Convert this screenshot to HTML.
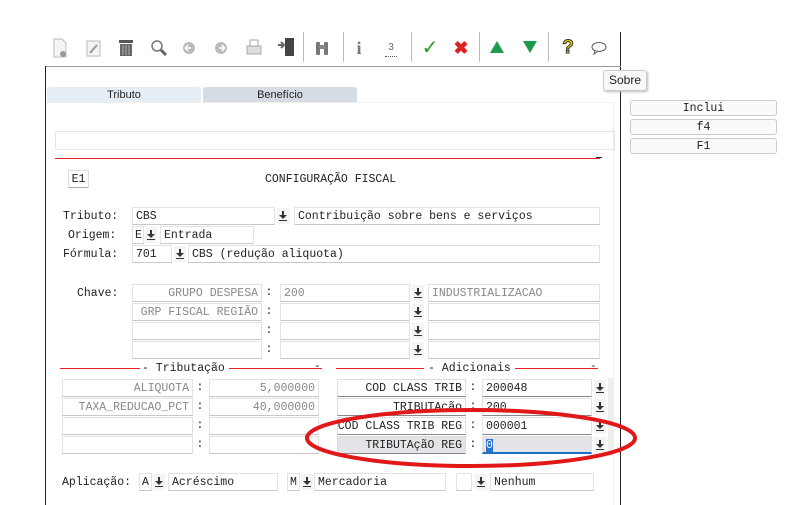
<!DOCTYPE html>
<html><head><meta charset="utf-8"><style>
*{box-sizing:border-box;margin:0;padding:0}
body{width:786px;height:505px;background:#fff;position:relative;overflow:hidden;font-family:"Liberation Mono",monospace;font-size:11.5px;color:#222}
.a{position:absolute}
.f{position:absolute;height:18px;background:#fff;border:1px solid #e2e2e2;border-bottom:1px solid #c8c8c8;line-height:17px;padding:0 3px;white-space:nowrap;overflow:hidden}
.g{color:#888}
.r{text-align:right}
.lb{position:absolute;height:18px;border:1px solid #ddd;border-bottom:1px solid #888;line-height:17px;padding:0 3px;text-align:right;background:#fff;white-space:nowrap;overflow:hidden;direction:rtl}
.ar{position:absolute;width:12px;height:16px;background:linear-gradient(#333,#333) 2px 12px/8px 1px no-repeat,#f4f4f4}
.ar::before{content:"";position:absolute;left:5px;top:3px;width:2px;height:5px;background:#333}
.ar::after{content:"";position:absolute;left:2px;top:7px;border-left:4px solid transparent;border-right:4px solid transparent;border-top:4px solid #333}
.c{position:absolute;width:8px;text-align:center;line-height:18px}
.t{position:absolute;line-height:19px}
.btn{position:absolute;left:630px;width:147px;height:16px;border:1px solid #ccc;border-radius:3px;background:#fafafa;text-align:center;line-height:15px;font-size:11.5px}
.ic{position:absolute;top:38px;font-family:"Liberation Sans",sans-serif;font-size:16px;line-height:20px;text-align:center;width:20px}
.sep{position:absolute;top:32px;width:1px;height:30px;background:#bbb}
</style></head><body>
<!-- toolbar -->
<svg class="a" style="left:52px;top:38px" width="16" height="20"><path d="M2 1h8l4 4v14H2z" fill="#f4f4f4" stroke="#bbb"/><circle cx="11" cy="16" r="3" fill="#999"/></svg>
<svg class="a" style="left:86px;top:40px" width="16" height="17"><rect x="1" y="1" width="13" height="15" fill="#f4f4f4" stroke="#bbb"/><path d="M4 13l7-8" stroke="#999" stroke-width="2"/></svg>
<svg class="a" style="left:118px;top:39px" width="16" height="18"><rect x="1" y="1" width="14" height="3" fill="#555"/><rect x="2" y="5" width="12" height="12" fill="#666"/><path d="M5 6v10M8 6v10M11 6v10" stroke="#aaa"/></svg>
<svg class="a" style="left:150px;top:39px" width="18" height="18"><circle cx="7" cy="7" r="5" fill="none" stroke="#777" stroke-width="1.5"/><path d="M11 11l5 5" stroke="#666" stroke-width="3"/></svg>
<svg class="a" style="left:182px;top:41px" width="14" height="14"><circle cx="7" cy="7" r="6" fill="#bbb"/><path d="M9 7H4M6 4L3.5 7 6 10" stroke="#fff" fill="none" stroke-width="1.5"/></svg>
<svg class="a" style="left:214px;top:41px" width="14" height="14"><circle cx="7" cy="7" r="6" fill="#bbb"/><path d="M5 7h5M8 4l2.5 3L8 10" stroke="#fff" fill="none" stroke-width="1.5"/></svg>
<svg class="a" style="left:246px;top:39px" width="16" height="17"><rect x="4" y="1" width="8" height="6" fill="#fff" stroke="#aaa"/><rect x="1" y="7" width="14" height="8" fill="#ddd" stroke="#aaa"/></svg>
<svg class="a" style="left:276px;top:37px" width="20" height="20"><rect x="9" y="1" width="9" height="18" fill="#444"/><path d="M2 8h6M5 5l3 3-3 3" stroke="#666" stroke-width="2" fill="none"/></svg>
<div class="sep" style="left:303px"></div>
<svg class="a" style="left:315px;top:40px" width="14" height="16"><rect x="1" y="2" width="4" height="13" rx="1" fill="#777"/><rect x="9" y="2" width="4" height="13" rx="1" fill="#777"/><rect x="4" y="5" width="6" height="4" fill="#888"/></svg>
<div class="sep" style="left:343px"></div>
<div class="ic" style="left:349px;color:#777;font-weight:bold;font-family:'Liberation Serif',serif;font-size:18px">i</div>
<div class="ic" style="left:381px;color:#666;font-size:10px">3</div>
<div class="a" style="left:385px;top:56px;width:12px;border-top:1px dotted #555"></div>
<div class="sep" style="left:411px"></div>
<div class="ic" style="left:420px;color:#2a9a2a;font-size:20px">&#x2713;</div>
<div class="ic" style="left:451px;color:#d22;font-size:18px;font-weight:bold">&#x2716;</div>
<div class="sep" style="left:479px"></div>
<svg class="a" style="left:489px;top:40px" width="16" height="14"><path d="M8 1L15 13H1z" fill="#1d9a4a"/></svg>
<svg class="a" style="left:522px;top:40px" width="16" height="14"><path d="M1 1h14L8 13z" fill="#1d9a4a"/></svg>
<div class="sep" style="left:548px"></div>
<div class="ic" style="left:558px;color:#e8d200;font-weight:bold;font-size:19px;-webkit-text-stroke:1px #333">?</div>
<svg class="a" style="left:590px;top:41px" width="18" height="14"><ellipse cx="9" cy="6" rx="7" ry="4.5" fill="#fff" stroke="#555"/><path d="M5 10l-1 3 4-3" fill="#fff" stroke="#555"/></svg>
<div class="a" style="left:620px;top:32px;width:1px;height:473px;background:#222"></div>
<!-- frame -->
<div class="a" style="left:45px;top:66px;width:576px;height:1px;background:#999"></div>
<div class="a" style="left:45px;top:66px;width:1px;height:439px;background:#222"></div>
<div class="a" style="left:603px;top:70px;width:44px;height:21px;border:1px solid #ccc;border-radius:3px;background:#f8f8f8;font-family:'Liberation Sans',sans-serif;font-size:12px;line-height:19px;text-align:center;box-shadow:1px 1px 2px #bbb">Sobre</div>
<div class="btn" style="top:100px">Inclui</div>
<div class="btn" style="top:119px">f4</div>
<div class="btn" style="top:138px">F1</div>
<!-- tabs -->
<div class="a" style="left:47px;top:87px;width:154px;height:15px;background:#e6eef5;border-radius:3px 3px 0 0;font-family:'Liberation Sans',sans-serif;font-size:11px;text-align:center;line-height:16px">Tributo</div>
<div class="a" style="left:203px;top:87px;width:154px;height:15px;background:#d5dce3;border-radius:3px 3px 0 0;font-family:'Liberation Sans',sans-serif;font-size:11px;text-align:center;line-height:16px">Benefício</div>
<div class="a" style="left:47px;top:102px;width:567px;height:403px;border-top:1px solid #eee;border-right:1px solid #eee"></div>
<div class="a" style="left:55px;top:131px;width:560px;height:19px;border:1px solid #e6e6e6"></div>
<div class="a" style="left:55px;top:158px;width:545px;height:1px;background:#e22"></div>
<div class="a" style="left:596px;top:157px;width:6px;height:1px;background:#333"></div>
<div class="f" style="left:68px;top:170px;width:21px;text-align:center;padding:0;border-color:#ddd;border-bottom-color:#aaa">E1</div>
<div class="t" style="left:265px;top:170px">CONFIGURAÇÃO FISCAL</div>
<!-- main fields -->
<div class="t" style="left:63px;top:207px">Tributo:</div>
<div class="f" style="left:132px;top:207px;width:143px">CBS</div><div class="ar" style="left:277px;top:208px"></div>
<div class="f" style="left:294px;top:207px;width:306px">Contribuição sobre bens e serviços</div>
<div class="t" style="left:68px;top:226px">Origem:</div>
<div class="f" style="left:132px;top:226px;width:12px;padding:0 2px">E</div><div class="ar" style="left:145px;top:227px"></div>
<div class="f" style="left:160px;top:226px;width:94px">Entrada</div>
<div class="t" style="left:63px;top:245px">Fórmula:</div>
<div class="f" style="left:132px;top:245px;width:40px">701</div><div class="ar" style="left:174px;top:246px"></div>
<div class="f" style="left:188px;top:245px;width:412px">CBS (redução aliquota)</div>
<!-- chave -->
<div class="t" style="left:77px;top:284px">Chave:</div>
<div class="f g r" style="left:132px;top:284px;width:130px">GRUPO DESPESA</div><div class="c" style="left:265px;top:284px">:</div>
<div class="f g" style="left:280px;top:284px;width:130px">200</div><div class="ar" style="left:412px;top:285px"></div>
<div class="f g" style="left:428px;top:284px;width:172px">INDUSTRIALIZACAO</div>
<div class="f g r" style="left:132px;top:303px;width:130px">GRP FISCAL REGIÃO</div><div class="c" style="left:265px;top:303px">:</div>
<div class="f" style="left:280px;top:303px;width:130px"></div><div class="ar" style="left:412px;top:304px"></div>
<div class="f" style="left:428px;top:303px;width:172px"></div>
<div class="f" style="left:132px;top:322px;width:130px"></div><div class="c" style="left:265px;top:322px">:</div>
<div class="f" style="left:280px;top:322px;width:130px"></div><div class="ar" style="left:412px;top:323px"></div>
<div class="f" style="left:428px;top:322px;width:172px"></div>
<div class="f" style="left:132px;top:341px;width:130px"></div><div class="c" style="left:265px;top:341px">:</div>
<div class="f" style="left:280px;top:341px;width:130px"></div><div class="ar" style="left:412px;top:342px"></div>
<div class="f" style="left:428px;top:341px;width:172px"></div>
<!-- group headers -->
<div class="a" style="left:60px;top:368px;width:262px;height:1px;background:#e22"></div>
<div class="t" style="left:140px;top:359px;background:#fff;padding:0 4px 0 2px">- Tributação</div>
<div class="a" style="left:314px;top:362px;font-size:11px;line-height:11px">-</div>
<div class="a" style="left:336px;top:368px;width:262px;height:1px;background:#e22"></div>
<div class="t" style="left:424px;top:359px;background:#fff;padding:0 4px">- Adicionais</div>
<div class="a" style="left:590px;top:362px;font-size:11px;line-height:11px">-</div>
<!-- tributação rows -->
<div class="f g r" style="left:62px;top:379px;width:131px">ALIQUOTA</div><div class="c" style="left:196px;top:379px">:</div>
<div class="f g r" style="left:209px;top:379px;width:110px">5,000000</div>
<div class="f g r" style="left:62px;top:398px;width:131px">TAXA_REDUCAO_PCT</div><div class="c" style="left:196px;top:398px">:</div>
<div class="f g r" style="left:209px;top:398px;width:110px">40,000000</div>
<div class="f" style="left:62px;top:417px;width:131px"></div><div class="c" style="left:196px;top:417px">:</div>
<div class="f" style="left:209px;top:417px;width:110px"></div>
<div class="f" style="left:62px;top:436px;width:131px"></div><div class="c" style="left:196px;top:436px">:</div>
<div class="f" style="left:209px;top:436px;width:110px"></div>
<!-- adicionais rows -->
<div class="a" style="left:608px;top:378px;width:6px;height:78px;background:#eee"></div>
<div class="lb" style="left:337px;top:379px;width:129px">COD CLASS TRIB</div><div class="c" style="left:469px;top:379px">:</div>
<div class="f" style="left:482px;top:379px;width:110px;border-bottom-color:#888">200048</div><div class="ar" style="left:594px;top:380px"></div>
<div class="lb" style="left:337px;top:398px;width:129px">TRIBUTAcão</div><div class="c" style="left:469px;top:398px">:</div>
<div class="f" style="left:482px;top:398px;width:110px;border-bottom-color:#888">200</div><div class="ar" style="left:594px;top:399px"></div>
<div class="lb" style="left:337px;top:417px;width:129px">COD CLASS TRIB REG</div><div class="c" style="left:469px;top:417px">:</div>
<div class="f" style="left:482px;top:417px;width:110px;border-bottom-color:#888">000001</div><div class="ar" style="left:594px;top:418px"></div>
<div class="lb" style="left:337px;top:436px;width:129px;background:#e4e4e8">TRIBUTAçãO REG</div><div class="c" style="left:469px;top:436px">:</div>
<div class="f" style="left:482px;top:436px;width:110px;background:#e4e4e8;border-bottom:2px solid #1a6fc4"><span style="background:#2a72d0;color:#fff">0</span></div><div class="ar" style="left:594px;top:437px"></div>
<!-- ellipse -->
<svg class="a" style="left:300px;top:400px" width="345" height="80"><ellipse cx="171" cy="38" rx="164" ry="28" fill="none" stroke="#e01818" stroke-width="4"/></svg>
<!-- aplicação -->
<div class="t" style="left:62px;top:473px">Aplicação:</div>
<div class="f" style="left:139px;top:473px;width:13px;padding:0 2px">A</div><div class="ar" style="left:153px;top:474px"></div>
<div class="f" style="left:168px;top:473px;width:110px">Acréscimo</div>
<div class="f" style="left:287px;top:473px;width:13px;padding:0 2px">M</div><div class="ar" style="left:301px;top:474px"></div>
<div class="f" style="left:314px;top:473px;width:132px">Mercadoria</div>
<div class="f" style="left:456px;top:473px;width:16px"></div><div class="ar" style="left:475px;top:474px"></div>
<div class="f" style="left:490px;top:473px;width:104px">Nenhum</div>
</body></html>
